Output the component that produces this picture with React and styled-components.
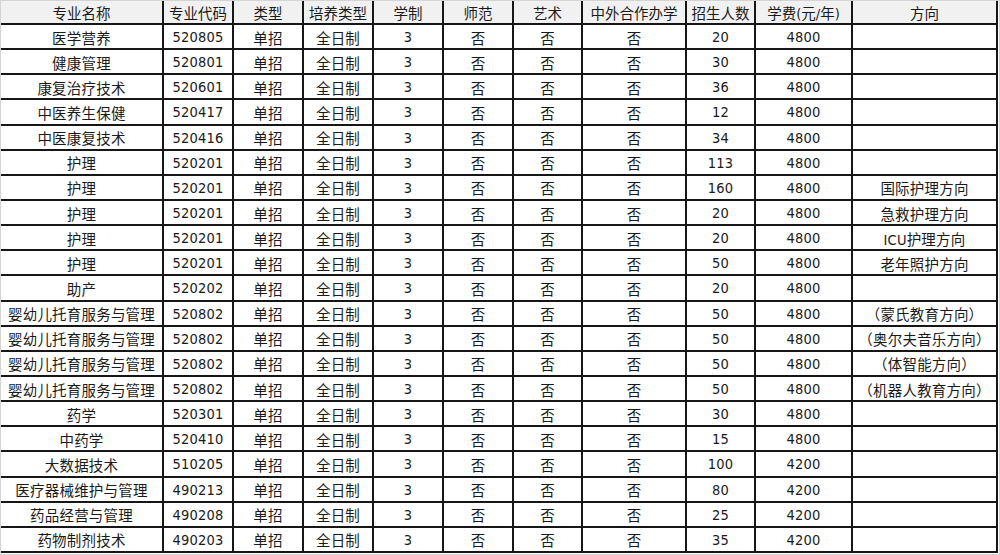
import React from 'react';
import styled, { createGlobalStyle } from 'styled-components';

const GlobalStyle = createGlobalStyle`
  html, body {
    margin: 0;
    padding: 0;
    background: #ffffff;
  }
`;

const columns = [
  { key: 'name', title: '专业名称', width: 163 },
  { key: 'code', title: '专业代码', width: 70 },
  { key: 'type', title: '类型', width: 70 },
  { key: 'mode', title: '培养类型', width: 70 },
  { key: 'years', title: '学制', width: 70 },
  { key: 'teacher', title: '师范', width: 70 },
  { key: 'art', title: '艺术', width: 69 },
  { key: 'coop', title: '中外合作办学', width: 104 },
  { key: 'count', title: '招生人数', width: 69 },
  { key: 'fee', title: '学费(元/年)', width: 97 },
  { key: 'dir', title: '方向', width: 145 },
];

const raw = [
  ['医学营养', '520805', 20, 4800, ''],
  ['健康管理', '520801', 30, 4800, ''],
  ['康复治疗技术', '520601', 36, 4800, ''],
  ['中医养生保健', '520417', 12, 4800, ''],
  ['中医康复技术', '520416', 34, 4800, ''],
  ['护理', '520201', 113, 4800, ''],
  ['护理', '520201', 160, 4800, '国际护理方向'],
  ['护理', '520201', 20, 4800, '急救护理方向'],
  ['护理', '520201', 20, 4800, 'ICU护理方向'],
  ['护理', '520201', 50, 4800, '老年照护方向'],
  ['助产', '520202', 20, 4800, ''],
  ['婴幼儿托育服务与管理', '520802', 50, 4800, '（蒙氏教育方向）'],
  ['婴幼儿托育服务与管理', '520802', 50, 4800, '（奥尔夫音乐方向）'],
  ['婴幼儿托育服务与管理', '520802', 50, 4800, '（体智能方向）'],
  ['婴幼儿托育服务与管理', '520802', 50, 4800, '（机器人教育方向）'],
  ['药学', '520301', 30, 4800, ''],
  ['中药学', '520410', 15, 4800, ''],
  ['大数据技术', '510205', 100, 4200, ''],
  ['医疗器械维护与管理', '490213', 80, 4200, ''],
  ['药品经营与管理', '490208', 25, 4200, ''],
  ['药物制剂技术', '490203', 35, 4200, ''],
];

const rows = raw.map(([name, code, count, fee, dir]) => ({
  name,
  code,
  type: '单招',
  mode: '全日制',
  years: '3',
  teacher: '否',
  art: '否',
  coop: '否',
  count,
  fee,
  dir,
}));

const Frame = styled.div`
  width: 1000px;
  height: 555px;
  box-sizing: border-box;
  border: 1px solid #d4d4d4;
  background: #ffffff;
  overflow: hidden;
`;

const Grid = styled.div`
  display: grid;
  grid-template-columns: ${columns.map(c => `${c.width}px`).join(' ')};
  grid-template-rows: 24px repeat(${rows.length}, 1fr);
  height: 552px;
  font-family: 'DejaVu Sans Condensed', 'DejaVu Sans', 'Noto Sans CJK SC', sans-serif;
  font-size: 14.5px;
  color: #1a1a1a;
`;

const Cell = styled.div`
  display: flex;
  align-items: center;
  justify-content: center;
  white-space: nowrap;
  overflow: hidden;
  box-sizing: border-box;
  border-right: 2px solid #161616;
  border-bottom: 2px solid #161616;
  background: ${p => (p.$head ? '#f1f1f1' : '#ffffff')};
  padding-top: 1px;
  letter-spacing: ${p => (p.$head ? '0' : '0.2px')};
`;

const App = () => (
  <>
    <GlobalStyle />
    <Frame>
      <Grid>
        {columns.map(c => (
          <Cell key={c.key} $head>
            {c.title}
          </Cell>
        ))}
        {rows.map((r, i) =>
          columns.map(c => <Cell key={`${i}-${c.key}`}>{r[c.key]}</Cell>)
        )}
      </Grid>
    </Frame>
  </>
);

export default App;
